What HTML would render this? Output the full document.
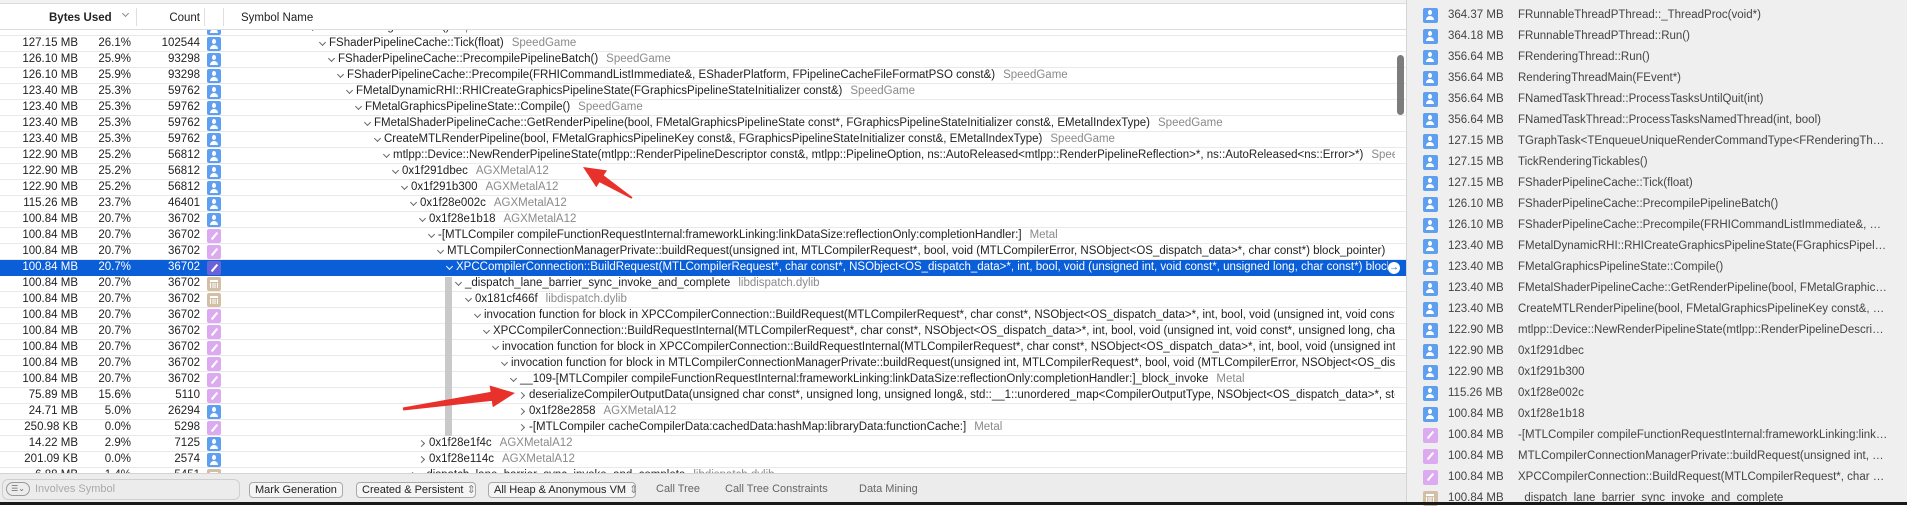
<!DOCTYPE html>
<html><head><meta charset="utf-8"><style>
*{margin:0;padding:0;box-sizing:border-box}
body{width:1907px;height:505px;overflow:hidden;background:#fff;font-family:"Liberation Sans",sans-serif;font-size:11.5px;color:#222;position:relative}
#left{position:absolute;left:0;top:0;width:1406px;height:505px;background:#fff;overflow:hidden}
#hdr{position:absolute;left:0;top:3px;width:1406px;height:27px;border-top:1px solid #dcdcdc;border-bottom:1px solid #dcdcdc;background:#fff}
#top{position:absolute;left:0;top:0;width:1406px;height:3px;background:#f2f2f2}
.h{position:absolute;top:8px;font-size:11.5px;color:#222}
.sep{position:absolute;top:4px;width:1px;height:18px;background:#dedede}
#body{position:absolute;left:0;top:30px;width:1406px;height:444px;overflow:hidden}
.r{position:absolute;left:0;width:1406px;height:16px;border-bottom:1px solid #e9e9e9;line-height:15px;white-space:nowrap}
.n{position:absolute;right:1328px;top:0}
.pc{position:absolute;right:1275px;top:0}
.c{position:absolute;right:1206px;top:0}
.ic{position:absolute;left:207px;top:1px;width:14px;height:14px;border-radius:2px}
.b{background:#5e9ff0}
.b::before{content:"";position:absolute;left:5px;top:2px;width:4px;height:5px;border-radius:50%;background:#fff}
.b::after{content:"";position:absolute;left:3px;top:8px;width:8px;height:4px;border-radius:4px 4px 0 0;background:#fff}
.p{background:#dcaaf0}
.p::after{content:"";position:absolute;left:3px;top:6px;width:9px;height:2px;background:#fff;transform:rotate(-50deg)}
.t{background:#d2bfa6}
.t::before{content:"";position:absolute;left:3px;top:3px;width:8px;height:2px;background:#fff}
.t::after{content:"";position:absolute;left:3px;top:6px;width:8px;height:5px;background:repeating-linear-gradient(90deg,#fff 0 1px,transparent 1px 2.3px)}
.s{position:absolute;top:0;right:11px;overflow:hidden;padding-left:10px}
.cv{position:absolute;left:1px;top:4px;width:5px;height:5px;border-right:1.3px solid #666;border-bottom:1.3px solid #666;transform:rotate(45deg)}
.cr{position:absolute;left:0px;top:5px;width:5px;height:5px;border-right:1.3px solid #666;border-bottom:1.3px solid #666;transform:rotate(-45deg)}
.g{color:#8a8a8a;margin-left:8px}
.sel{background:#0a5ed8;color:#fff;border-bottom-color:#0a5ed8}
.sel .g{color:#fff}
.sel .cv{border-color:#fff}
.sel .ic{background:#6b62d8}
#guide{position:absolute;left:445px;top:247px;width:7px;height:159px;background:#c9c9c9}
#bar{position:absolute;left:0;top:473px;width:1406px;height:29px;background:#ececec;border-top:1px solid #d4d4d4;font-size:11px}
.btn{position:absolute;top:8px;height:16px;border:1px solid #a9a9a9;border-radius:4px;background:#f5f5f5;line-height:14px;padding:0 5px;color:#222;white-space:nowrap}
.tab{position:absolute;top:9px;color:#666}
#right{position:absolute;left:1406px;top:0;width:501px;height:505px;background:#efefef;border-left:1px solid #d4d4d4}
.rr{position:absolute;left:0;height:21px;width:500px;line-height:21px;color:#444;white-space:nowrap}
.rr .ic{left:16px;top:3px;width:15px;height:15px}
.rr .sz{position:absolute;left:41px}
.rr .nm{position:absolute;left:111px;width:370px;overflow:hidden;text-overflow:ellipsis}
#blk{position:absolute;left:0;top:502px;width:1907px;height:3px;background:#1a1a1a}
</style></head><body>
<div id="left">
<div id="top"></div>
<div id="hdr">
<span class="h" style="left:49px;font-weight:bold">Bytes Used</span>
<span style="position:absolute;left:123px;top:7px;width:5px;height:5px;border-right:1px solid #888;border-bottom:1px solid #888;transform:rotate(45deg)"></span>
<div class="sep" style="left:136px"></div>
<span class="h" style="right:1206px">Count</span>
<div class="sep" style="left:204px"></div>
<div class="sep" style="left:223px"></div>
<span class="h" style="left:241px">Symbol Name</span>
</div>
<div id="body">
<div class="r" style="top:-10px"><span class="n">127.15 MB</span><span class="pc">26.1%</span><span class="c">102544</span><i class="ic b"></i><div class="s" style="left:310px"><i class="cr"></i>TickRenderingTickables()<span class="g">SpeedGame</span></div></div>
<div class="r" style="top:6px"><span class="n">127.15 MB</span><span class="pc">26.1%</span><span class="c">102544</span><i class="ic b"></i><div class="s" style="left:319px"><i class="cv"></i>FShaderPipelineCache::Tick(float)<span class="g">SpeedGame</span></div></div>
<div class="r" style="top:22px"><span class="n">126.10 MB</span><span class="pc">25.9%</span><span class="c">93298</span><i class="ic b"></i><div class="s" style="left:328px"><i class="cv"></i>FShaderPipelineCache::PrecompilePipelineBatch()<span class="g">SpeedGame</span></div></div>
<div class="r" style="top:38px"><span class="n">126.10 MB</span><span class="pc">25.9%</span><span class="c">93298</span><i class="ic b"></i><div class="s" style="left:337px"><i class="cv"></i>FShaderPipelineCache::Precompile(FRHICommandListImmediate&amp;, EShaderPlatform, FPipelineCacheFileFormatPSO const&amp;)<span class="g">SpeedGame</span></div></div>
<div class="r" style="top:54px"><span class="n">123.40 MB</span><span class="pc">25.3%</span><span class="c">59762</span><i class="ic b"></i><div class="s" style="left:346px"><i class="cv"></i>FMetalDynamicRHI::RHICreateGraphicsPipelineState(FGraphicsPipelineStateInitializer const&amp;)<span class="g">SpeedGame</span></div></div>
<div class="r" style="top:70px"><span class="n">123.40 MB</span><span class="pc">25.3%</span><span class="c">59762</span><i class="ic b"></i><div class="s" style="left:355px"><i class="cv"></i>FMetalGraphicsPipelineState::Compile()<span class="g">SpeedGame</span></div></div>
<div class="r" style="top:86px"><span class="n">123.40 MB</span><span class="pc">25.3%</span><span class="c">59762</span><i class="ic b"></i><div class="s" style="left:364px"><i class="cv"></i>FMetalShaderPipelineCache::GetRenderPipeline(bool, FMetalGraphicsPipelineState const*, FGraphicsPipelineStateInitializer const&amp;, EMetalIndexType)<span class="g">SpeedGame</span></div></div>
<div class="r" style="top:102px"><span class="n">123.40 MB</span><span class="pc">25.3%</span><span class="c">59762</span><i class="ic b"></i><div class="s" style="left:374px"><i class="cv"></i>CreateMTLRenderPipeline(bool, FMetalGraphicsPipelineKey const&amp;, FGraphicsPipelineStateInitializer const&amp;, EMetalIndexType)<span class="g">SpeedGame</span></div></div>
<div class="r" style="top:118px"><span class="n">122.90 MB</span><span class="pc">25.2%</span><span class="c">56812</span><i class="ic b"></i><div class="s" style="left:383px"><i class="cv"></i>mtlpp::Device::NewRenderPipelineState(mtlpp::RenderPipelineDescriptor const&amp;, mtlpp::PipelineOption, ns::AutoReleased&lt;mtlpp::RenderPipelineReflection&gt;*, ns::AutoReleased&lt;ns::Error&gt;*)<span class="g">SpeedGame</span></div></div>
<div class="r" style="top:134px"><span class="n">122.90 MB</span><span class="pc">25.2%</span><span class="c">56812</span><i class="ic b"></i><div class="s" style="left:392px"><i class="cv"></i>0x1f291dbec<span class="g">AGXMetalA12</span></div></div>
<div class="r" style="top:150px"><span class="n">122.90 MB</span><span class="pc">25.2%</span><span class="c">56812</span><i class="ic b"></i><div class="s" style="left:401px"><i class="cv"></i>0x1f291b300<span class="g">AGXMetalA12</span></div></div>
<div class="r" style="top:166px"><span class="n">115.26 MB</span><span class="pc">23.7%</span><span class="c">46401</span><i class="ic b"></i><div class="s" style="left:410px"><i class="cv"></i>0x1f28e002c<span class="g">AGXMetalA12</span></div></div>
<div class="r" style="top:182px"><span class="n">100.84 MB</span><span class="pc">20.7%</span><span class="c">36702</span><i class="ic b"></i><div class="s" style="left:419px"><i class="cv"></i>0x1f28e1b18<span class="g">AGXMetalA12</span></div></div>
<div class="r" style="top:198px"><span class="n">100.84 MB</span><span class="pc">20.7%</span><span class="c">36702</span><i class="ic p"></i><div class="s" style="left:428px"><i class="cv"></i>-[MTLCompiler compileFunctionRequestInternal:frameworkLinking:linkDataSize:reflectionOnly:completionHandler:]<span class="g">Metal</span></div></div>
<div class="r" style="top:214px"><span class="n">100.84 MB</span><span class="pc">20.7%</span><span class="c">36702</span><i class="ic p"></i><div class="s" style="left:437px"><i class="cv"></i>MTLCompilerConnectionManagerPrivate::buildRequest(unsigned int, MTLCompilerRequest*, bool, void (MTLCompilerError, NSObject&lt;OS_dispatch_data&gt;*, char const*) block_pointer)</div></div>
<div class="r sel" style="top:230px"><span class="n">100.84 MB</span><span class="pc">20.7%</span><span class="c">36702</span><i class="ic p"></i><div class="s" style="left:446px;right:18px"><i class="cv"></i>XPCCompilerConnection::BuildRequest(MTLCompilerRequest*, char const*, NSObject&lt;OS_dispatch_data&gt;*, int, bool, void (unsigned int, void const*, unsigned long, char const*) block_pointer)</div><span style="position:absolute;left:1388px;top:2px;width:12px;height:12px;border-radius:50%;background:#fff;color:#0a5ed8;font-size:10px;line-height:12px;text-align:center;font-weight:bold">→</span></div>
<div class="r" style="top:246px"><span class="n">100.84 MB</span><span class="pc">20.7%</span><span class="c">36702</span><i class="ic t"></i><div class="s" style="left:455px"><i class="cv"></i>_dispatch_lane_barrier_sync_invoke_and_complete<span class="g">libdispatch.dylib</span></div></div>
<div class="r" style="top:262px"><span class="n">100.84 MB</span><span class="pc">20.7%</span><span class="c">36702</span><i class="ic t"></i><div class="s" style="left:465px"><i class="cv"></i>0x181cf466f<span class="g">libdispatch.dylib</span></div></div>
<div class="r" style="top:278px"><span class="n">100.84 MB</span><span class="pc">20.7%</span><span class="c">36702</span><i class="ic p"></i><div class="s" style="left:474px"><i class="cv"></i>invocation function for block in XPCCompilerConnection::BuildRequest(MTLCompilerRequest*, char const*, NSObject&lt;OS_dispatch_data&gt;*, int, bool, void (unsigned int, void const*, unsigned long, char const*) block_pointer)</div></div>
<div class="r" style="top:294px"><span class="n">100.84 MB</span><span class="pc">20.7%</span><span class="c">36702</span><i class="ic p"></i><div class="s" style="left:483px"><i class="cv"></i>XPCCompilerConnection::BuildRequestInternal(MTLCompilerRequest*, char const*, NSObject&lt;OS_dispatch_data&gt;*, int, bool, void (unsigned int, void const*, unsigned long, char const*) block_pointer)</div></div>
<div class="r" style="top:310px"><span class="n">100.84 MB</span><span class="pc">20.7%</span><span class="c">36702</span><i class="ic p"></i><div class="s" style="left:492px"><i class="cv"></i>invocation function for block in XPCCompilerConnection::BuildRequestInternal(MTLCompilerRequest*, char const*, NSObject&lt;OS_dispatch_data&gt;*, int, bool, void (unsigned int, void const*, unsigned long, char const*) block_pointer)</div></div>
<div class="r" style="top:326px"><span class="n">100.84 MB</span><span class="pc">20.7%</span><span class="c">36702</span><i class="ic p"></i><div class="s" style="left:501px"><i class="cv"></i>invocation function for block in MTLCompilerConnectionManagerPrivate::buildRequest(unsigned int, MTLCompilerRequest*, bool, void (MTLCompilerError, NSObject&lt;OS_dispatch_data&gt;*, char const*) block_pointer)</div></div>
<div class="r" style="top:342px"><span class="n">100.84 MB</span><span class="pc">20.7%</span><span class="c">36702</span><i class="ic p"></i><div class="s" style="left:510px"><i class="cv"></i>__109-[MTLCompiler compileFunctionRequestInternal:frameworkLinking:linkDataSize:reflectionOnly:completionHandler:]_block_invoke<span class="g">Metal</span></div></div>
<div class="r" style="top:358px"><span class="n">75.89 MB</span><span class="pc">15.6%</span><span class="c">5110</span><i class="ic p"></i><div class="s" style="left:519px"><i class="cr"></i>deserializeCompilerOutputData(unsigned char const*, unsigned long, unsigned long&amp;, std::__1::unordered_map&lt;CompilerOutputType, NSObject&lt;OS_dispatch_data&gt;*, std::__1::hash&lt;CompilerOutputType&gt;&gt;)</div></div>
<div class="r" style="top:374px"><span class="n">24.71 MB</span><span class="pc">5.0%</span><span class="c">26294</span><i class="ic b"></i><div class="s" style="left:519px"><i class="cr"></i>0x1f28e2858<span class="g">AGXMetalA12</span></div></div>
<div class="r" style="top:390px"><span class="n">250.98 KB</span><span class="pc">0.0%</span><span class="c">5298</span><i class="ic p"></i><div class="s" style="left:519px"><i class="cr"></i>-[MTLCompiler cacheCompilerData:cachedData:hashMap:libraryData:functionCache:]<span class="g">Metal</span></div></div>
<div class="r" style="top:406px"><span class="n">14.22 MB</span><span class="pc">2.9%</span><span class="c">7125</span><i class="ic b"></i><div class="s" style="left:419px"><i class="cr"></i>0x1f28e1f4c<span class="g">AGXMetalA12</span></div></div>
<div class="r" style="top:422px"><span class="n">201.09 KB</span><span class="pc">0.0%</span><span class="c">2574</span><i class="ic b"></i><div class="s" style="left:419px"><i class="cr"></i>0x1f28e114c<span class="g">AGXMetalA12</span></div></div>
<div class="r" style="top:438px"><span class="n">6.88 MB</span><span class="pc">1.4%</span><span class="c">5451</span><i class="ic t"></i><div class="s" style="left:410px"><i class="cr"></i>_dispatch_lane_barrier_sync_invoke_and_complete<span class="g">libdispatch.dylib</span></div></div>
<div id="guide"></div>
</div>
<div style="position:absolute;left:1397px;top:55px;width:7px;height:60px;border-radius:4px;background:#7c7c7c"></div>
<div id="bar">
<div style="position:absolute;left:2px;top:5px;width:238px;height:21px;border:1px solid #cfcfcf;border-radius:6px;background:#ececec"></div>
<div style="position:absolute;left:6px;top:8px;width:24px;height:14px;border:1px solid #999;border-radius:7px;font-size:8px;line-height:12px;color:#666;text-align:center">☰⌄</div>
<span class="tab" style="left:35px;color:#aaa;top:9px">Involves Symbol</span>
<span class="btn" style="left:249px;width:94px">Mark Generation</span>
<span class="btn" style="left:356px;width:120px">Created &amp; Persistent <span style="color:#888">⇕</span></span>
<span class="btn" style="left:488px;width:148px">All Heap &amp; Anonymous VM <span style="color:#888">⇕</span></span>
<span class="tab" style="left:656px">Call Tree</span>
<span class="tab" style="left:725px">Call Tree Constraints</span>
<span class="tab" style="left:859px">Data Mining</span>
</div>
</div>
<svg style="position:absolute;left:0;top:0" width="1406" height="505"><g fill="#e8312a">
<polygon points="583,167 607,170.4 603.7,175.4 632.5,197.2 631.5,198.8 599.5,182.2 596.3,187.2"/>
<polygon points="515,393 489.6,385.5 490.6,391.9 402.8,407.5 403.2,410.5 491.8,400.9 492.8,407.3"/>
</g></svg>
<div id="right">
<div class="rr" style="top:5px"><i class="ic b"></i><span class="sz">364.37 MB</span><span class="nm">FRunnableThreadPThread::_ThreadProc(void*)</span></div>
<div class="rr" style="top:26px"><i class="ic b"></i><span class="sz">364.18 MB</span><span class="nm">FRunnableThreadPThread::Run()</span></div>
<div class="rr" style="top:47px"><i class="ic b"></i><span class="sz">356.64 MB</span><span class="nm">FRenderingThread::Run()</span></div>
<div class="rr" style="top:68px"><i class="ic b"></i><span class="sz">356.64 MB</span><span class="nm">RenderingThreadMain(FEvent*)</span></div>
<div class="rr" style="top:89px"><i class="ic b"></i><span class="sz">356.64 MB</span><span class="nm">FNamedTaskThread::ProcessTasksUntilQuit(int)</span></div>
<div class="rr" style="top:110px"><i class="ic b"></i><span class="sz">356.64 MB</span><span class="nm">FNamedTaskThread::ProcessTasksNamedThread(int, bool)</span></div>
<div class="rr" style="top:131px"><i class="ic b"></i><span class="sz">127.15 MB</span><span class="nm">TGraphTask&lt;TEnqueueUniqueRenderCommandType&lt;FRenderingThreadTickHolder</span></div>
<div class="rr" style="top:152px"><i class="ic b"></i><span class="sz">127.15 MB</span><span class="nm">TickRenderingTickables()</span></div>
<div class="rr" style="top:173px"><i class="ic b"></i><span class="sz">127.15 MB</span><span class="nm">FShaderPipelineCache::Tick(float)</span></div>
<div class="rr" style="top:194px"><i class="ic b"></i><span class="sz">126.10 MB</span><span class="nm">FShaderPipelineCache::PrecompilePipelineBatch()</span></div>
<div class="rr" style="top:215px"><i class="ic b"></i><span class="sz">126.10 MB</span><span class="nm">FShaderPipelineCache::Precompile(FRHICommandListImmediate&amp;, EShader</span></div>
<div class="rr" style="top:236px"><i class="ic b"></i><span class="sz">123.40 MB</span><span class="nm">FMetalDynamicRHI::RHICreateGraphicsPipelineState(FGraphicsPipelineState</span></div>
<div class="rr" style="top:257px"><i class="ic b"></i><span class="sz">123.40 MB</span><span class="nm">FMetalGraphicsPipelineState::Compile()</span></div>
<div class="rr" style="top:278px"><i class="ic b"></i><span class="sz">123.40 MB</span><span class="nm">FMetalShaderPipelineCache::GetRenderPipeline(bool, FMetalGraphicsPipeline</span></div>
<div class="rr" style="top:299px"><i class="ic b"></i><span class="sz">123.40 MB</span><span class="nm">CreateMTLRenderPipeline(bool, FMetalGraphicsPipelineKey const&amp;, FGraph</span></div>
<div class="rr" style="top:320px"><i class="ic b"></i><span class="sz">122.90 MB</span><span class="nm">mtlpp::Device::NewRenderPipelineState(mtlpp::RenderPipelineDescriptor</span></div>
<div class="rr" style="top:341px"><i class="ic b"></i><span class="sz">122.90 MB</span><span class="nm">0x1f291dbec</span></div>
<div class="rr" style="top:362px"><i class="ic b"></i><span class="sz">122.90 MB</span><span class="nm">0x1f291b300</span></div>
<div class="rr" style="top:383px"><i class="ic b"></i><span class="sz">115.26 MB</span><span class="nm">0x1f28e002c</span></div>
<div class="rr" style="top:404px"><i class="ic b"></i><span class="sz">100.84 MB</span><span class="nm">0x1f28e1b18</span></div>
<div class="rr" style="top:425px"><i class="ic p"></i><span class="sz">100.84 MB</span><span class="nm">-[MTLCompiler compileFunctionRequestInternal:frameworkLinking:linkDataSize</span></div>
<div class="rr" style="top:446px"><i class="ic p"></i><span class="sz">100.84 MB</span><span class="nm">MTLCompilerConnectionManagerPrivate::buildRequest(unsigned int, MTLComp</span></div>
<div class="rr" style="top:467px"><i class="ic p"></i><span class="sz">100.84 MB</span><span class="nm">XPCCompilerConnection::BuildRequest(MTLCompilerRequest*, char const*</span></div>
<div class="rr" style="top:488px"><i class="ic t"></i><span class="sz">100.84 MB</span><span class="nm">_dispatch_lane_barrier_sync_invoke_and_complete</span></div>
</div>
<div id="blk"></div>
</body></html>
